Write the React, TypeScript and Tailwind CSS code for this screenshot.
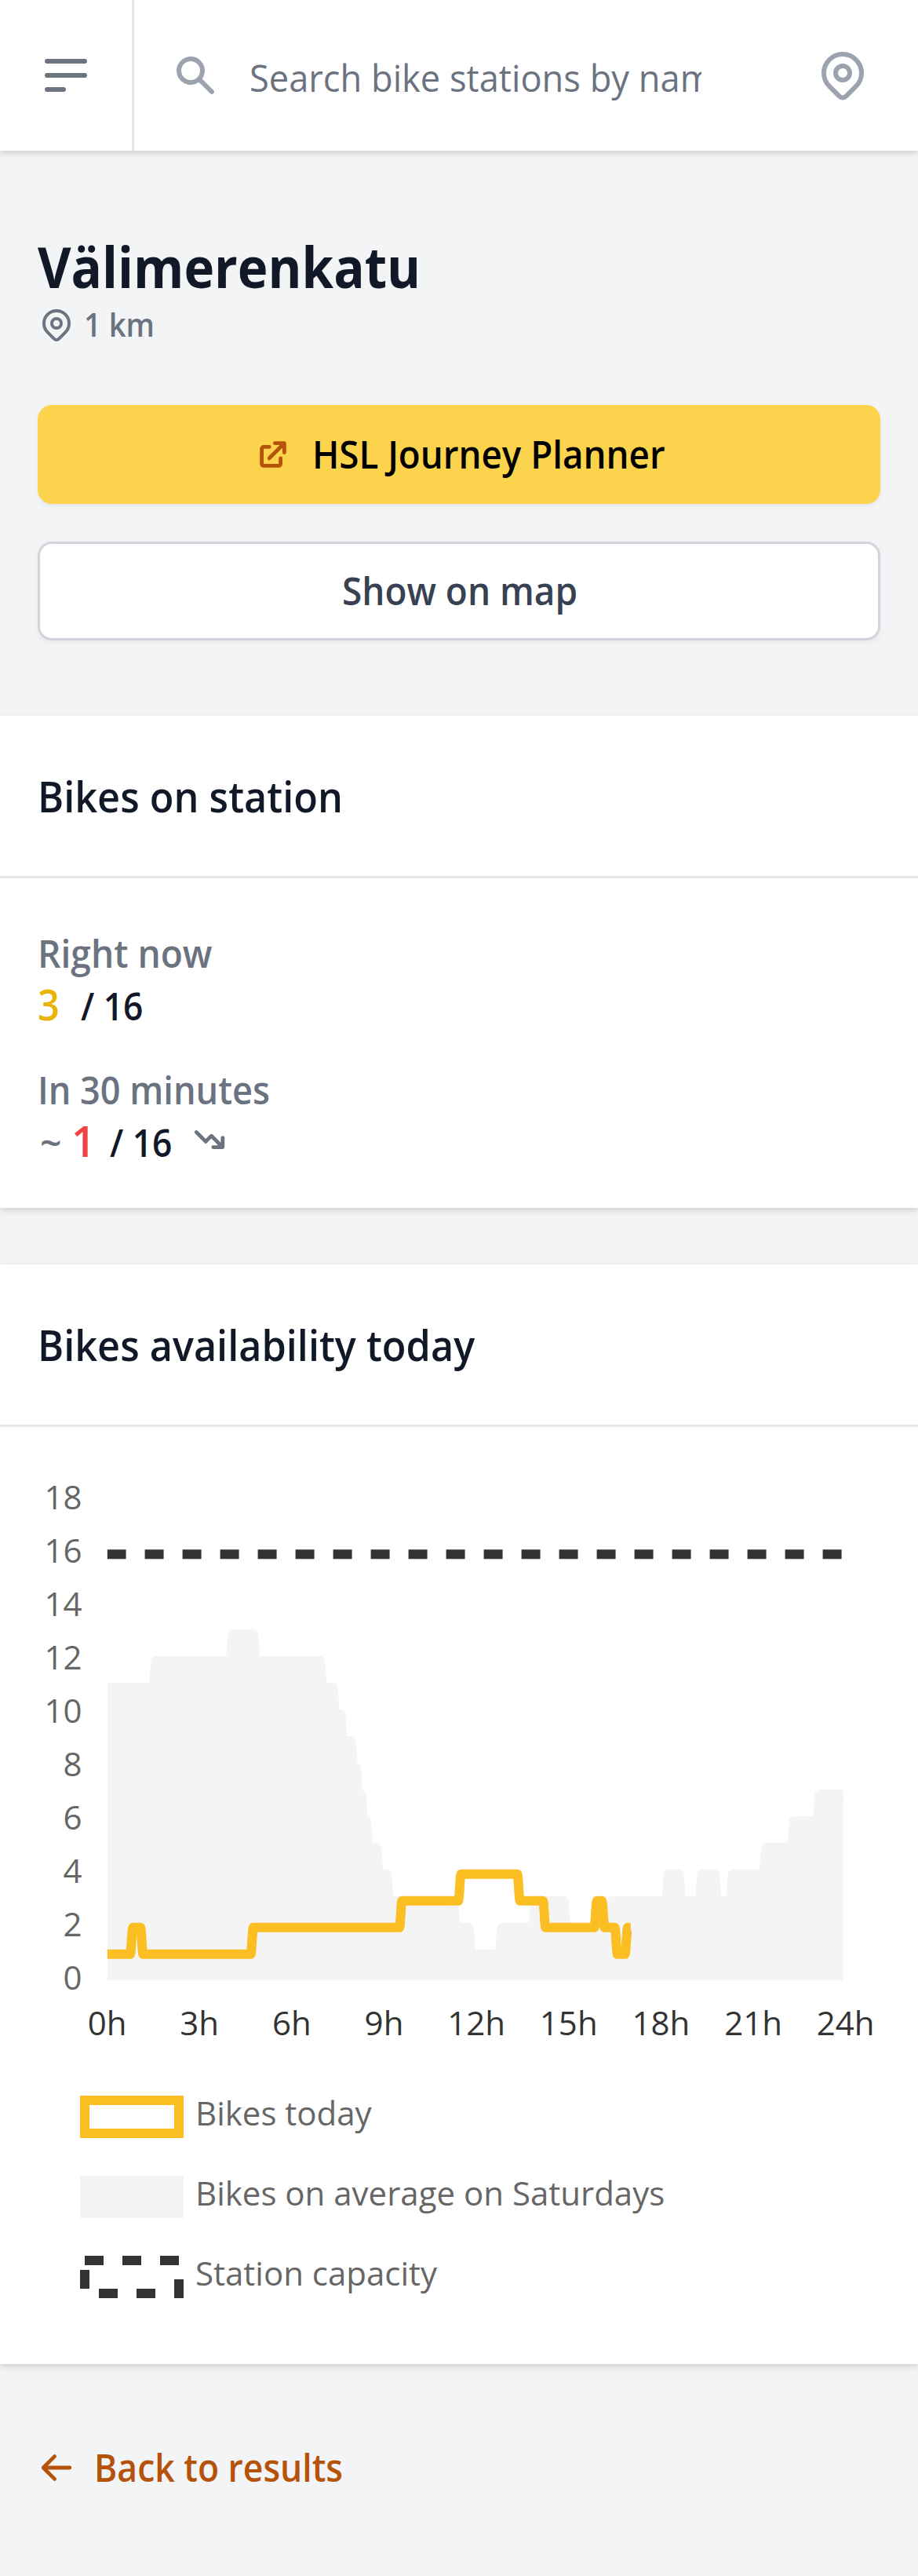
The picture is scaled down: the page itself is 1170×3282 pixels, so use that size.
import React from "react";

const STEP = 3.2676;
const LEFT = 136.6;
const RIGHT = 1074.8;
const ZERO = 705.7;
const UNIT = 33.97;

const px = (i: number) => LEFT + i * STEP;
const py = (v: number) => ZERO - v * UNIT;

// Each entry is [index of the last sample before the change, new value].
const average: [number, number][] = [
  [18, 12], [48, 13], [57, 12], [83, 11], [88, 10], [91, 9], [95, 8], [97, 7],
  [99, 6], [101, 5], [105, 4], [109, 3], [135, 2], [141, 1], [153, 2], [166, 3],
  [178, 2], [196, 3], [218, 4], [223, 3], [231, 4], [237, 3], [243, 4], [256, 5],
  [267, 6], [277, 7],
];
const today: [number, number][] = [
  [9, 2], [13, 1], [56, 2], [114, 3], [137, 4], [160, 3], [170, 2], [190, 3],
  [193, 2], [198, 1], [202, 2],
];

function stepPath(start: number, changes: [number, number][], endX: number) {
  let value = start;
  let d = `M${LEFT} ${py(value)}`;
  for (const [i, next] of changes) {
    const x0 = px(i);
    const x1 = px(i + 1);
    const third = STEP / 3;
    d += `L${x0} ${py(value)}C${x0 + third} ${py(value)} ${x1 - third} ${py(next)} ${x1} ${py(next)}`;
    value = next;
  }
  return `${d}L${endX} ${py(value)}`;
}

const averageLine = stepPath(11, average, RIGHT);
const todayLine = stepPath(1, today, 803.8);

function Pin({ className }: { className: string }) {
  return (
    <svg className={className} viewBox="0 0 24 24" fill="none" stroke="currentColor" strokeWidth="2" strokeLinecap="round" strokeLinejoin="round">
      <path d="M17.657 16.657L13.414 20.9a1.998 1.998 0 01-2.827 0l-4.244-4.243a8 8 0 1111.314 0z" />
      <path d="M15 11a3 3 0 11-6 0 3 3 0 016 0z" />
    </svg>
  );
}

function Header() {
  return (
    <header className="relative flex h-48 items-start bg-white shadow-[0_3px_9px_rgba(0,0,0,0.1),0_3px_6px_rgba(0,0,0,0.06)]">
      <button className="flex h-48 w-[171px] items-start border-r-[3px] border-gray-200 pt-[60px] pl-12 text-[#6b7280]">
        <svg className="size-[72px]" viewBox="0 0 24 24" fill="none" stroke="currentColor" strokeWidth="2" strokeLinecap="round">
          <path d="M4 6h16M4 12h16M4 18h7" />
        </svg>
      </button>
      <svg className="mt-[66px] ml-12 size-[60px] text-[#9ca3af]" viewBox="0 0 20 20" fill="currentColor">
        <path fillRule="evenodd" clipRule="evenodd" d="M8 4a4 4 0 100 8 4 4 0 000-8zM2 8a6 6 0 1110.89 3.476l4.817 4.817a1 1 0 01-1.414 1.414l-4.816-4.816A6 6 0 012 8z" />
      </svg>
      <div className="mt-[63px] ml-[39px] w-[576px] overflow-hidden">
        <span className="block origin-left scale-x-[0.9425] text-5xl leading-[72px] whitespace-nowrap text-[#6b7280]">
          Search bike stations by name
        </span>
      </div>
      <Pin className="mt-[60px] ml-36 size-[72px] text-[#9ca3af]" />
    </header>
  );
}

function StationIntro() {
  return (
    <div className="px-12 pt-[101px] pb-24">
      <h1 className="origin-left scale-x-[0.9095] text-7xl leading-[92px] font-bold whitespace-nowrap text-[#111827]">Välimerenkatu</h1>
      <div className="-mt-px flex h-[60px] items-center font-semibold text-[#6b7280]">
        <Pin className="size-12" />
        <span className="mb-[2px] ml-[11px] origin-left scale-x-[0.909] text-[42px] leading-[56px]">1 km</span>
      </div>
      <div className="mt-[72px] flex flex-col gap-12 text-5xl font-semibold">
        <button className="flex h-[126px] items-center justify-center gap-[26px] rounded-[18px] bg-[#fcd34d] text-black shadow-[0_3px_6px_rgba(0,0,0,0.05)]">
          <svg className="size-12 text-[#b45309]" viewBox="0 0 20 20" fill="currentColor">
            <path d="M11 3a1 1 0 100 2h2.586l-6.293 6.293a1 1 0 101.414 1.414L15 6.414V9a1 1 0 102 0V4a1 1 0 00-1-1h-5z" />
            <path d="M5 5a2 2 0 00-2 2v8a2 2 0 002 2h8a2 2 0 002-2v-3a1 1 0 10-2 0v3H5V7h3a1 1 0 000-2H5z" />
          </svg>
          <span className="w-[448px] origin-left scale-x-[0.952] text-left whitespace-nowrap">HSL Journey Planner</span>
        </button>
        <button className="flex h-[126px] items-center justify-center rounded-[18px] border-[3px] border-[#d1d5db] bg-white text-[#374151] shadow-[0_3px_6px_rgba(0,0,0,0.05)]">
          <span className="w-[299px] origin-left scale-x-[0.957] text-left whitespace-nowrap">Show on map</span>
        </button>
      </div>
    </div>
  );
}

function Card({ title, children }: { title: string; children: React.ReactNode }) {
  return (
    <section className="bg-white shadow-[0_3px_9px_rgba(0,0,0,0.1),0_3px_6px_rgba(0,0,0,0.06)]">
      <div className="flex h-[207px] items-center border-b-[3px] border-gray-200 px-12">
        <h2 className="origin-left scale-x-[0.933] text-[54px] leading-[72px] font-semibold whitespace-nowrap text-[#111827]">{title}</h2>
      </div>
      {children}
    </section>
  );
}

function Counts() {
  return (
    <dl className="flex flex-col gap-6 px-12 pt-[60px] pb-[36px] font-semibold text-[#111827]">
      <div>
        <dt className="origin-left scale-x-[0.961] text-5xl leading-[72px] text-[#6b7280]">Right now</dt>
        <dd className="flex h-[78px] items-baseline text-5xl leading-[56px]">
          <span className="w-[55px] origin-left scale-x-[0.9] text-[54px] leading-[56px] text-[#eab308]">3</span>
          <span className="origin-left scale-x-[0.922]">/ 16</span>
        </dd>
      </div>
      <div>
        <dt className="origin-left scale-x-[0.939] text-5xl leading-[72px] text-[#6b7280]">In 30 minutes</dt>
        <dd className="flex h-[78px] items-baseline text-5xl leading-[56px]">
          <span className="w-[43px] pl-[3px] text-[#6b7280]">~</span>
          <span className="w-[49px] text-[54px] leading-[56px] text-[#ef4444]">1</span>
          <span className="w-[103px] origin-left scale-x-[0.922] whitespace-nowrap">/ 16</span>
          <svg className="mt-[3px] size-12 self-start text-[#6b7280]" viewBox="0 0 20 20" fill="currentColor">
            <path fillRule="evenodd" clipRule="evenodd" d="M12 13a1 1 0 100 2h5a1 1 0 001-1V9a1 1 0 10-2 0v2.586l-4.293-4.293a1 1 0 00-1.414 0L8 9.586 3.707 5.293a1 1 0 00-1.414 1.414l5 5a1 1 0 001.414 0L11 9.414 14.586 13H12z" />
          </svg>
        </dd>
      </div>
    </dl>
  );
}

function AvailabilityChart() {
  return (
    <svg className="block h-[824px] w-[1170px] text-[42px]" viewBox="0 0 1170 824">
      <defs>
        <clipPath id="plot">
          <rect x={LEFT} y="90" width={RIGHT - LEFT} height={705.3 - 90} />
        </clipPath>
      </defs>
      <g fill="#666666" textAnchor="end">
        {[18, 16, 14, 12, 10, 8, 6, 4, 2, 0].map((v) => (
          <text key={v} x="104.5" y={717 - v * 34}>{v}</text>
        ))}
      </g>
      <g fill="#333333" textAnchor="middle">
        {[0, 3, 6, 9, 12, 15, 18, 21, 24].map((h) => (
          <text key={h} x={px(h * 12)} y="775">{h}h</text>
        ))}
      </g>
      <g clipPath="url(#plot)" fill="none" strokeWidth="12">
        <path d={`${averageLine}V${ZERO}H${LEFT}Z`} fill="#f4f4f4" />
        <path d={averageLine} stroke="rgba(242,242,242,0.85)" />
        <path d={todayLine} stroke="#fbbf24" />
        <path d={`M${LEFT} ${py(16)}H${RIGHT}`} stroke="#333333" strokeDasharray="24 24" />
      </g>
    </svg>
  );
}

const legend = [
  { label: "Bikes today", fill: "none", stroke: "#fbbf24", dash: undefined },
  { label: "Bikes on average on Saturdays", fill: "#f4f4f4", stroke: "rgba(242,242,242,0.85)", dash: undefined },
  { label: "Station capacity", fill: "none", stroke: "#333333", dash: "24 24" },
];

function Legend() {
  return (
    <ul className="flex flex-col gap-12 pt-7 pb-21 pl-[102px] text-[42px] text-[#666666]">
      {legend.map((item) => (
        <li key={item.label} className="flex h-[54px]">
          <svg className="h-[54px] w-[132px]" viewBox="0 0 132 54">
            <path d="M6 6H126V48H6Z" fill={item.fill} stroke={item.stroke} strokeWidth="12" strokeDasharray={item.dash} />
          </svg>
          <span className="-mt-[5px] ml-[15px] leading-[54px]">{item.label}</span>
        </li>
      ))}
    </ul>
  );
}

export default function App() {
  return (
    <div className="min-h-[3282px] w-[1170px] overflow-hidden bg-[#f3f4f6] font-['Open_Sans',sans-serif]">
      <Header />
      <main>
        <StationIntro />
        <div className="flex flex-col gap-18">
          <Card title="Bikes on station">
            <Counts />
          </Card>
          <Card title="Bikes availability today">
            <AvailabilityChart />
            <Legend />
          </Card>
        </div>
        <a className="flex h-[168px] items-center px-12 pt-24 text-5xl font-semibold text-[#b45309]">
          <svg className="size-12" viewBox="0 0 20 20" fill="currentColor">
            <path fillRule="evenodd" clipRule="evenodd" d="M9.707 16.707a1 1 0 01-1.414 0l-6-6a1 1 0 010-1.414l6-6a1 1 0 011.414 1.414L5.414 9H17a1 1 0 110 2H5.414l4.293 4.293a1 1 0 010 1.414z" />
          </svg>
          <span className="ml-[24px] origin-left scale-x-[0.927] whitespace-nowrap">Back to results</span>
        </a>
      </main>
    </div>
  );
}
